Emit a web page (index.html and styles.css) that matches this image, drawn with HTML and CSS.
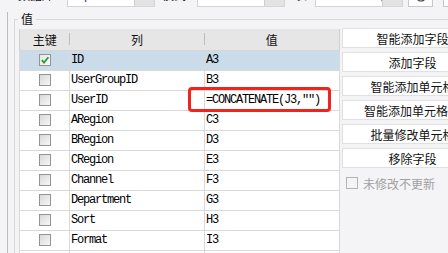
FILE: index.html
```html
<!DOCTYPE html>
<html lang="zh-CN">
<head>
  <meta charset="UTF-8" />
  <title>值</title>
  <link rel="stylesheet" href="styles.css">
</head>
<body>
  <div class="toolbar">
    <span class="tb-label lbl-db">数据库:</span>
    <div class="combo"><span class="combo-text">Reports</span><span class="combo-btn"></span></div>
    <span class="tb-label lbl-schema">模式:</span>
    <div class="combo"><span class="combo-text">AdminUs</span><span class="combo-btn"></span></div>
    <span class="tb-label lbl-table">表:</span>
    <div class="combo"><span class="combo-text">UserSetting</span><span class="combo-btn"></span></div>
    <button class="tb-btn refresh">
      <svg width="14" height="14" viewBox="0 0 14 14"><path d="M12 7a5 5 0 1 1-1.5-3.6" fill="none" stroke="#444" stroke-width="1.2"/></svg>
    </button>
    <button class="tb-btn more"></button>
  </div>

  <div class="panel">
    <fieldset class="group">
      <legend>值</legend>
      <div class="content">
        <div class="grid">
          <table class="fields">
            <colgroup><col class="c-key"><col class="c-col"><col class="c-val"></colgroup>
            <thead>
              <tr><th>主键</th><th>列</th><th class="last">值</th></tr>
            </thead>
            <tbody>
              <tr class="selected">
                <td class="key"><span class="check on"><svg width="10" height="10" viewBox="0 0 10 10"><path d="M1.8 5.2 L4 7.6 L8.4 2.2" fill="none" stroke="#2f9a2f" stroke-width="1.8"/></svg></span></td>
                <td>ID</td><td>A3</td>
              </tr>
              <tr><td class="key"><span class="check"></span></td><td>UserGroupID</td><td>B3</td></tr>
              <tr><td class="key"><span class="check"></span></td><td>UserID</td><td>=CONCATENATE(J3,"")</td></tr>
              <tr><td class="key"><span class="check"></span></td><td>ARegion</td><td>C3</td></tr>
              <tr><td class="key"><span class="check"></span></td><td>BRegion</td><td>D3</td></tr>
              <tr><td class="key"><span class="check"></span></td><td>CRegion</td><td>E3</td></tr>
              <tr><td class="key"><span class="check"></span></td><td>Channel</td><td>F3</td></tr>
              <tr><td class="key"><span class="check"></span></td><td>Department</td><td>G3</td></tr>
              <tr><td class="key"><span class="check"></span></td><td>Sort</td><td>H3</td></tr>
              <tr><td class="key"><span class="check"></span></td><td>Format</td><td>I3</td></tr>
              <tr><td class="key"><span class="check"></span></td><td></td><td></td></tr>
            </tbody>
          </table>
          <div class="mark"></div>
        </div>

        <div class="actions">
          <button class="act">智能添加字段</button>
          <button class="act">添加字段</button>
          <button class="act">智能添加单元格</button>
          <button class="act narrow">智能添加单元格</button>
          <button class="act">批量修改单元格</button>
          <button class="act">移除字段</button>
          <label class="opt"><span class="box"></span>未修改不更新</label>
        </div>
      </div>
    </fieldset>
  </div>
</body>
</html>
```

FILE: styles.css
```css
*, *::before, *::after { box-sizing: border-box; }
html, body { margin: 0; padding: 0; overflow: hidden; }
body {
  width: 448px;
  height: 253px;
  background: #f4f4f6;
  font-family: "Noto Sans CJK SC", "Liberation Sans", sans-serif;
  font-size: 12px;
  color: #111;
}

/* top toolbar, only its lower edge is visible */
.toolbar {
  height: 8px;
  display: flex;
  align-items: flex-end;
  overflow: hidden;
}
.toolbar > * { flex: none; margin-bottom: 1px; }
.tb-label { height: 20px; line-height: 16px; }
.lbl-db { margin-left: 18px; width: 49px; }
.lbl-schema { margin-left: 7px; width: 35px; }
.lbl-table { margin-left: 10px; width: 20px; }
.combo {
  display: flex;
  width: 88px;
  height: 20px;
  background: #fff;
  border: 1px solid #d4d4d4;
}
.combo-text {
  flex: 1;
  padding-left: 4px;
  line-height: 16px;
  font-family: "Liberation Mono", monospace;
  font-size: 12px;
  letter-spacing: -1.2px;
  color: #1a2a8a;
  overflow: hidden;
}
.combo-btn { width: 20px; background: #e3e3e3; border-left: 1px solid #d0d0d0; }
.tb-btn {
  width: 25px;
  height: 22px;
  padding: 0;
  background: #fff;
  border: 1px solid #c8c8c8;
  display: flex;
  align-items: center;
  justify-content: center;
}
.refresh { margin-left: 5px; }
.more { margin-left: 10px; }

/* main group */
.panel {
  margin-left: 7px;
  padding-left: 6px;
  border-left: 1px solid #bdbdbd;
  height: 245px;
}
.group {
  margin: 4px 0 0;
  padding: 3px 0 0 4px;
  border: 1px solid #d8d8d8;
  border-right: none;
  border-bottom: none;
  min-width: 0;
}
.group legend {
  padding: 0 3px;
  margin-left: -1px;
  line-height: 14px;
  font-size: 12px;
}
.content { display: flex; align-items: flex-start; }

.grid { position: relative; flex: none; }
.fields {
  width: 320px;
  table-layout: fixed;
  border-collapse: collapse;
  background: #fff;
  border-left: 1px solid #cfcfcf;
}
.c-key { width: 50px; }
.c-col { width: 135px; }
.c-val { width: 135px; }
.fields th {
  height: 21px;
  padding: 0;
  font-weight: normal;
  font-size: 12px;
  background: linear-gradient(#bcbcbc, #bcbcbc) right center / 1px 12px no-repeat, #e6e6e6;
  border-bottom: 1px solid #d6d6d6;
}
.fields th.last { background: #e6e6e6; border-right: 1px solid #cfcfcf; }
.fields td {
  height: 20px;
  padding: 0 0 0 1px;
  border: 1px solid #d9d9d9;
  font-family: "Liberation Mono", monospace;
  font-size: 12px;
  letter-spacing: -1.2px;
  color: #000;
  white-space: nowrap;
  overflow: hidden;
}
.fields td.key { padding: 0; text-align: center; }
.selected td { background: #cadbe9; }

.check {
  display: inline-flex;
  align-items: center;
  justify-content: center;
  width: 12px;
  height: 12px;
  vertical-align: middle;
  border: 1px solid #939393;
  background: linear-gradient(135deg, #d9d9d9, #f7f7f7);
}
.check.on { background: linear-gradient(135deg, #e4e4e4, #fbfbfb); }

/* highlight annotation over the formula cell */
.mark {
  position: absolute;
  left: 169px;
  top: 58px;
  width: 143px;
  height: 25px;
  border: 3px solid #f2231a;
  border-radius: 4px;
}

/* right column of buttons */
.actions {
  flex: none;
  width: 141px;
  margin: -1px 0 0 2px;
  display: flex;
  flex-direction: column;
  align-items: flex-start;
  gap: 4px;
}
.act {
  width: 141px;
  height: 20px;
  padding: 0;
  background: #fff;
  border: 1px solid #e0e0e0;
  font-family: "Noto Sans CJK SC", sans-serif;
  font-size: 12px;
  color: #111;
  text-align: center;
}
.act.narrow { width: 128px; }
.opt {
  display: flex;
  align-items: center;
  gap: 5px;
  height: 16px;
  margin-top: 3px;
  padding-left: 4px;
  color: #a0a0a0;
}
.box {
  width: 12px;
  height: 12px;
  border: 1px solid #b4b4b4;
  background: #f4f4f6;
}
```
